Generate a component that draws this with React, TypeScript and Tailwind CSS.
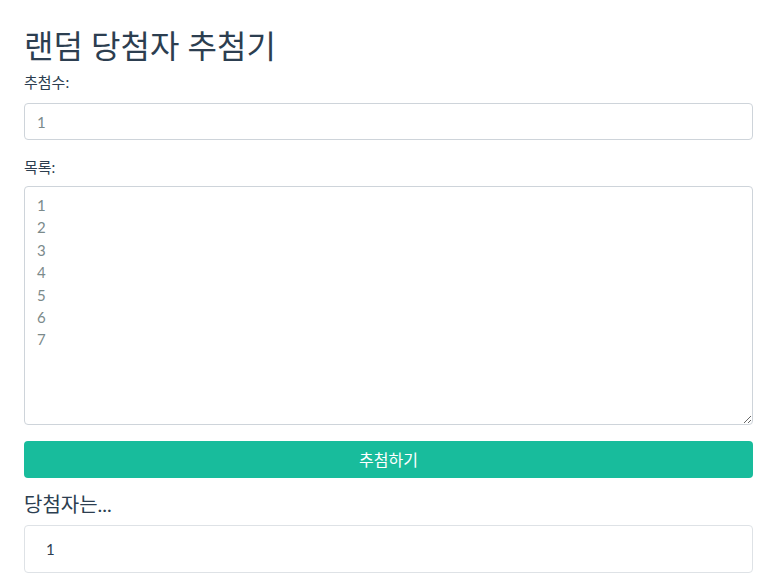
import { useState } from "react";

const FONT = "font-['Lato','Noto_Sans_CJK_KR',sans-serif]";

export default function App() {
  const [count, setCount] = useState("1");
  const [list, setList] = useState("1\n2\n3\n4\n5\n6\n7");
  const [winners, setWinners] = useState<string[]>(["1"]);

  const draw = () => {
    const items = list.split("\n").map((s) => s.trim()).filter(Boolean);
    const n = Math.max(1, parseInt(count) || 1);
    const shuffled = [...items].sort(() => Math.random() - 0.5);
    setWinners(shuffled.slice(0, n));
  };

  return (
    <div className={`${FONT} bg-white min-h-screen pl-6 pr-[23px] text-[#2c3e50]`}>
      <h1 className="pt-[27px] text-[32px] leading-[38px] font-normal text-[#2c3e50]">
        랜덤 당첨자 추첨기
      </h1>

      {/* 추첨수 */}
      <label className="block mt-[7px] text-[15px] leading-[20px] text-[#2c3e50]">
        추첨수:
      </label>
      <input
        type="text"
        value={count}
        onChange={(e) => setCount(e.target.value)}
        className="mt-[11px] block w-full h-[37px] px-[12px] border border-[#ced4da] rounded-[4px] text-[15px] text-[#7b8a8b] outline-none"
      />

      {/* 목록 */}
      <label className="block mt-[17px] text-[15px] leading-[20px] text-[#2c3e50]">
        목록:
      </label>
      <textarea
        value={list}
        onChange={(e) => setList(e.target.value)}
        className="mt-[9px] block w-full h-[239px] px-[12px] py-[7px] border border-[#ced4da] rounded-[4px] text-[15px] leading-[22.4px] text-[#7b8a8b] outline-none resize-y"
      />

      <button
        onClick={draw}
        className="mt-[16px] block w-full h-[37px] bg-[#18bc9c] text-white text-[16px] rounded-[4px]"
      >
        추첨하기
      </button>

      <h4 className="mt-[14px] text-[20px] leading-[24px] text-[#2c3e50]">
        당첨자는...
      </h4>
      <div className="mt-[9px] border border-[#dee2e6] rounded-[4px] px-[21px] py-[11px]">
        {winners.map((w, i) => (
          <div key={i} className="text-[15px] leading-[24px] text-[#2c3e50]">
            {w}
          </div>
        ))}
      </div>
    </div>
  );
}
